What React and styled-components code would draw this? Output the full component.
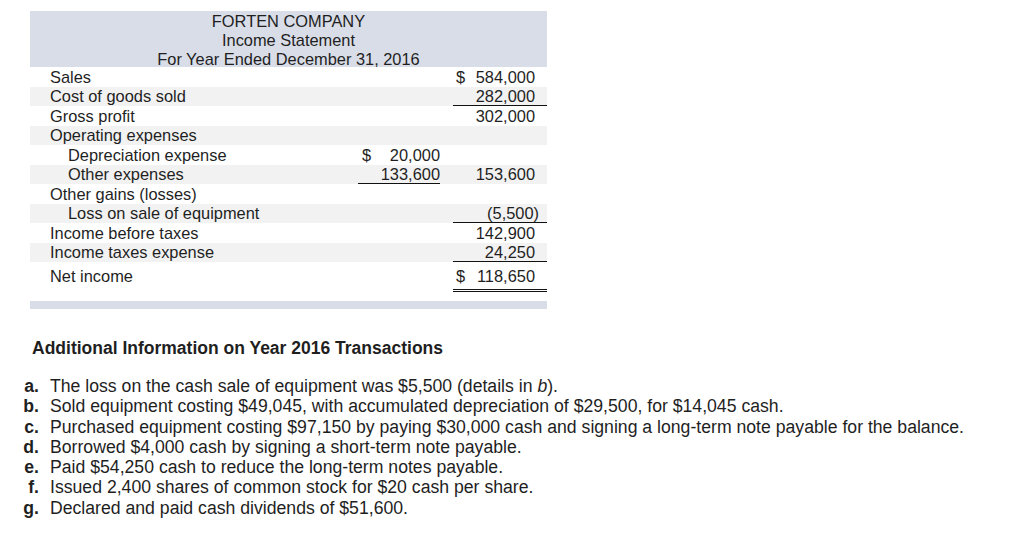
import React from 'react';
import styled, { createGlobalStyle } from 'styled-components';

const GlobalStyle = createGlobalStyle`
  body {
    margin: 0;
    background: #fff;
    font-family: "Liberation Sans", Arial, sans-serif;
    color: #1f1f1f;
  }
`;

const rows = [
  { label: 'Sales', col2: '584,000', sign2: true },
  { label: 'Cost of goods sold', col2: '282,000', rule2: 'single' },
  { label: 'Gross profit', col2: '302,000' },
  { label: 'Operating expenses' },
  { label: 'Depreciation expense', indent: true, col1: '20,000', sign1: true },
  { label: 'Other expenses', indent: true, col1: '133,600', rule1: 'single', col2: '153,600' },
  { label: 'Other gains (losses)' },
  { label: 'Loss on sale of equipment', indent: true, col2: '(5,500)', rule2: 'single', paren: true },
  { label: 'Income before taxes', col2: '142,900' },
  { label: 'Income taxes expense', col2: '24,250', rule2: 'single' },
  { label: 'Net income', col2: '118,650', sign2: true, rule2: 'double', total: true },
];

const notes = [
  { key: 'a.', text: <>The loss on the cash sale of equipment was $5,500 (details in <i>b</i>).</> },
  { key: 'b.', text: 'Sold equipment costing $49,045, with accumulated depreciation of $29,500, for $14,045 cash.' },
  { key: 'c.', text: 'Purchased equipment costing $97,150 by paying $30,000 cash and signing a long-term note payable for the balance.' },
  { key: 'd.', text: 'Borrowed $4,000 cash by signing a short-term note payable.' },
  { key: 'e.', text: 'Paid $54,250 cash to reduce the long-term notes payable.' },
  { key: 'f.', text: 'Issued 2,400 shares of common stock for $20 cash per share.' },
  { key: 'g.', text: 'Declared and paid cash dividends of $51,600.' },
];

function Amount({ value, sign, rule, paren, right }) {
  return (
    <StyledAmount rule={rule} right={right} paren={paren}>
      <span>{sign ? '$' : ''}</span>
      <span>{value}</span>
    </StyledAmount>
  );
}

function App() {
  return (
    <>
      <GlobalStyle />
      <Page>
        <Statement>
          <Header>
            <div>FORTEN COMPANY</div>
            <div>Income Statement</div>
            <div>For Year Ended December 31, 2016</div>
          </Header>
          {rows.map((r, i) => (
            <Row key={i} shaded={i % 2 === 1} total={r.total}>
              <Label indent={r.indent}>{r.label}</Label>
              {r.col1 ? <Amount value={r.col1} sign={r.sign1} rule={r.rule1} /> : <span />}
              {r.col2 ? (
                <Amount value={r.col2} sign={r.sign2} rule={r.rule2} paren={r.paren} right />
              ) : (
                <span />
              )}
            </Row>
          ))}
          <FooterBar />
        </Statement>

        <Notes>
          <NotesTitle>Additional Information on Year 2016 Transactions</NotesTitle>
          <NoteList>
            {notes.map((n) => (
              <NoteItem key={n.key}>
                <NoteKey>{n.key}</NoteKey>
                <span>{n.text}</span>
              </NoteItem>
            ))}
          </NoteList>
        </Notes>
      </Page>
    </>
  );
}

const Page = styled.div`
  padding: 11px 0 0 0;
`;

const Statement = styled.div`
  margin-left: 30px;
  width: 517px;
  font-size: 16.4px;
`;

const Header = styled.div`
  background: #d9dde7;
  text-align: center;
  line-height: 19px;
  height: 56px;
  padding-top: 1px;
  box-sizing: border-box;
`;

const Row = styled.div`
  display: grid;
  grid-template-columns: 1fr 82px 94px;
  column-gap: 13px;
  height: ${(p) => (p.total ? '30px' : '19.5px')};
  line-height: 19.5px;
  padding-top: ${(p) => (p.total ? '4.5px' : '0.5px')};
  background: ${(p) => (p.shaded ? '#f2f2f2' : '#fff')};
  align-items: start;
  box-sizing: border-box;
`;

const Label = styled.span`
  padding-left: ${(p) => (p.indent ? '38px' : '20px')};
  white-space: nowrap;
`;

const StyledAmount = styled.span`
  display: flex;
  justify-content: space-between;
  padding: ${(p) => (p.right ? (p.paren ? '0 8px 0 3px' : '0 12px 0 3px') : '0 0 0 4px')};
  box-sizing: border-box;
  height: ${(p) => (p.rule === 'double' ? '25px' : '19px')};
  border-bottom: ${(p) =>
    p.rule === 'single' ? '1px solid #111' : p.rule === 'double' ? '3px double #111' : 'none'};
`;

const FooterBar = styled.div`
  background: #d9dde7;
  height: 8px;
  margin-top: 9px;
`;

const Notes = styled.div`
  margin-top: 30px;
  font-size: 17.65px;
`;

const NotesTitle = styled.div`
  font-weight: bold;
  padding-left: 32px;
  line-height: 19px;
  font-size: 17.5px;
`;

const NoteList = styled.div`
  margin-top: 18px;
`;

const NoteItem = styled.div`
  display: grid;
  grid-template-columns: 20px 1fr;
  column-gap: 11px;
  padding-left: 19px;
  line-height: 20.3px;
  white-space: nowrap;
`;

const NoteKey = styled.b`
  text-align: right;
`;

export default App;
